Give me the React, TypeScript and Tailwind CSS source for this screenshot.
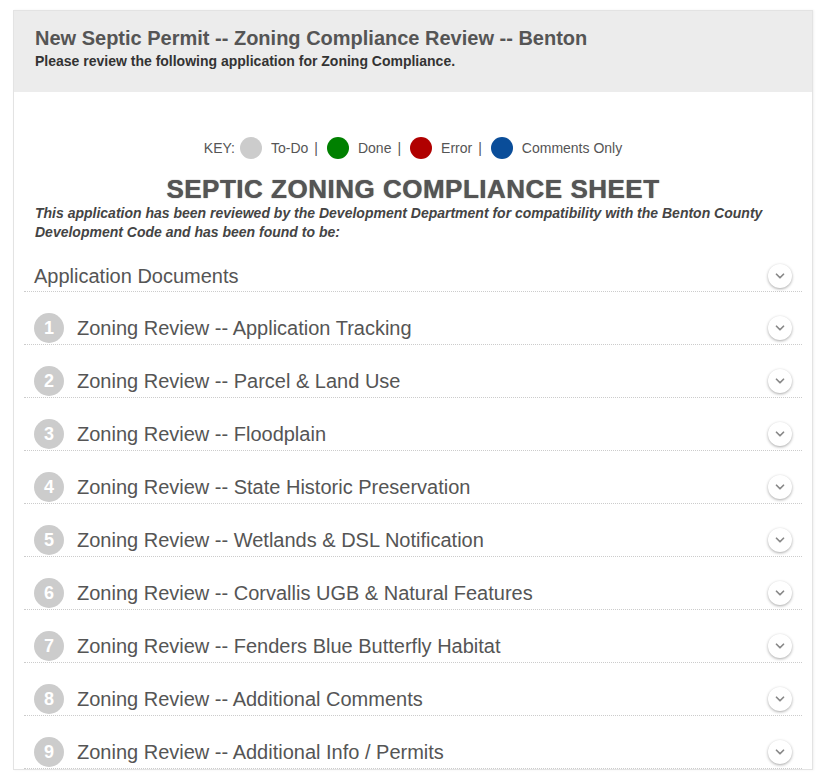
import { ChevronDown } from 'lucide-react';

const KEY = [
  { label: 'To-Do', color: 'bg-[#cccccc]' },
  { label: 'Done', color: 'bg-[#008000]' },
  { label: 'Error', color: 'bg-[#b00000]' },
  { label: 'Comments Only', color: 'bg-[#0a4d99]' },
];

const STEPS = [
  'Application Tracking',
  'Parcel & Land Use',
  'Floodplain',
  'State Historic Preservation',
  'Wetlands & DSL Notification',
  'Corvallis UGB & Natural Features',
  'Fenders Blue Butterfly Habitat',
  'Additional Comments',
  'Additional Info / Permits',
];

function Toggle() {
  return (
    <span className="w-6 h-6 rounded-full bg-white shadow-[0_1px_3px_rgba(0,0,0,0.35)] flex items-center justify-center text-[#888]">
      <ChevronDown className="w-3.5 h-3.5" strokeWidth={3} />
    </span>
  );
}

export default function App() {
  return (
    <div className="bg-white min-h-[784px] pt-[10px] pl-[13px] font-['Liberation_Sans',Arial,sans-serif] text-[#555]">
      <div className="w-[800px] border border-[#e3e3e3] shadow-[1px_0_2px_rgba(0,0,0,0.06)]">
        <div className="bg-[#ececec] h-[81px] px-[21px] pt-[15px]">
          <h1 className="text-[20px] leading-[24px] font-bold">New Septic Permit -- Zoning Compliance Review -- Benton</h1>
          <p className="text-[14px] leading-[17px] font-bold text-[#333] mt-[3px]">
            Please review the following application for Zoning Compliance.
          </p>
        </div>

        <div className="px-[10px] pt-[42px]">
          <div className="flex items-center justify-center text-[14px] text-[#555] h-[28px]">
            <span>KEY:</span>
            {KEY.map((k, i) => (
              <span key={k.label} className="flex items-center">
                <span className={`w-[22px] h-[22px] rounded-full ml-[5px] mr-[9px] ${k.color}`} />
                <span>{k.label}</span>
                {i < KEY.length - 1 && <span className="ml-[6px] mr-[4px]">|</span>}
              </span>
            ))}
          </div>

          <h2 className="text-center text-[26px] leading-[30px] font-bold mt-[12px] tracking-[0.5px] [text-shadow:0_0_1px_#555]">
            SEPTIC ZONING COMPLIANCE SHEET
          </h2>
          <p className="px-[11px] text-[14px] leading-[19px] font-bold italic text-[#444]">
            This application has been reviewed by the Development Department for compatibility with the Benton County
            Development Code and has been found to be:
          </p>

          <div>
            <div className="flex items-center justify-between px-[10px] h-[50px] pt-[18px] border-b border-dotted border-[#ccc]">
              <span className="text-[20px]">Application Documents</span>
              <Toggle />
            </div>
            {STEPS.map((s, i) => (
              <div
                key={s}
                className="flex items-center justify-between px-[10px] h-[53px] pt-[20px] border-b border-dotted border-[#ccc]"
              >
                <span className="flex items-center">
                  <span className="w-[30px] h-[30px] rounded-full bg-[#cccccc] text-white font-bold text-[18px] flex items-center justify-center mr-[13px]">
                    {i + 1}
                  </span>
                  <span className="text-[20px]">Zoning Review -- {s}</span>
                </span>
                <Toggle />
              </div>
            ))}
          </div>
        </div>
      </div>
    </div>
  );
}
